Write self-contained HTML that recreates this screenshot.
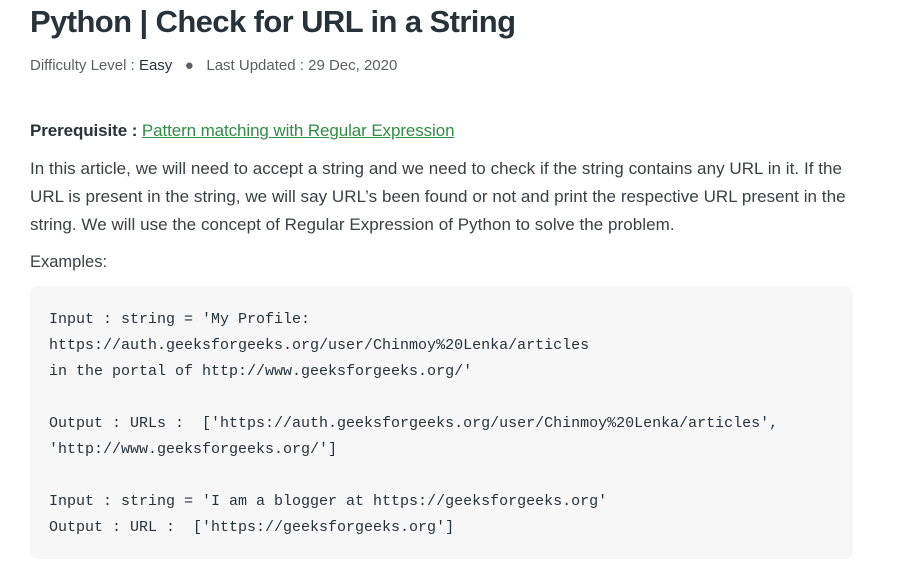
<!DOCTYPE html>
<html><head><meta charset="utf-8"><style>
body{margin:0;background:#fff;width:899px;height:579px;overflow:hidden;font-family:"Liberation Sans",sans-serif;color:#273239}
h1{position:absolute;left:30px;top:1px;margin:0;font-size:31px;font-weight:600;line-height:42px;color:#273239;letter-spacing:-0.6px}
.meta{position:absolute;left:30px;top:57px;font-size:15px;color:#5a5f63}
.meta b{font-weight:normal;color:#273239}
.pre{position:absolute;left:30px;top:120px;font-size:17px;line-height:22px;letter-spacing:-0.1px}
.pre a{color:#2f8d46;text-decoration:underline}
.p{position:absolute;left:30px;top:155px;width:840px;font-size:17px;line-height:28px;color:#3a3f44;letter-spacing:0.05px}
.ex{position:absolute;left:30px;top:253px;font-size:16.5px;color:#3a3f44}
.code{position:absolute;left:30px;top:286px;width:823px;height:273px;background:#f7f7f8;border-radius:8px}
pre{margin:0;position:absolute;left:19px;top:21px;font-family:"Liberation Mono",monospace;font-size:15px;line-height:26px;color:#273239}
</style></head><body>
<h1>Python | Check for URL in a String</h1>
<div class="meta">Difficulty Level : <b>Easy</b> &nbsp;&nbsp;●&nbsp;&nbsp; Last Updated : 29 Dec, 2020</div>
<div class="pre"><b>Prerequisite : </b><a>Pattern matching with Regular Expression</a></div>
<div class="p">In this article, we will need to accept a string and we need to check if the string contains any URL in it. If the<br>URL is present in the string, we will say URL’s been found or not and print the respective URL present in the<br>string. We will use the concept of Regular Expression of Python to solve the problem.</div>
<div class="ex">Examples:</div>
<div class="code"><pre>Input : string = 'My Profile: 
https://auth.geeksforgeeks.org/user/Chinmoy%20Lenka/articles 
in the portal of http://www.geeksforgeeks.org/'

Output : URLs :  ['https://auth.geeksforgeeks.org/user/Chinmoy%20Lenka/articles',
'http://www.geeksforgeeks.org/']

Input : string = 'I am a blogger at https://geeksforgeeks.org'
Output : URL :  ['https://geeksforgeeks.org']</pre></div>
</body></html>
